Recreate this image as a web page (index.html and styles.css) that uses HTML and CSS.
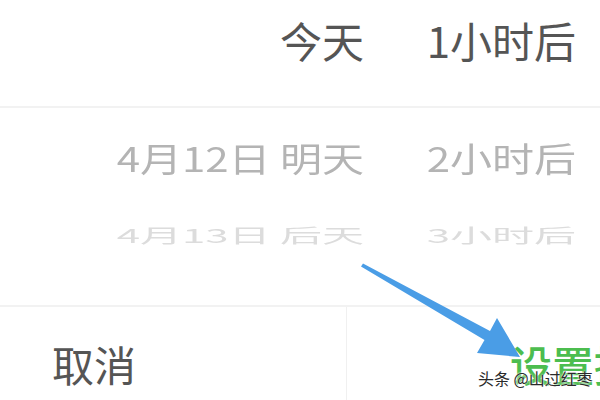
FILE: index.html
```html
<!DOCTYPE html>
<html lang="zh-CN">
<head>
  <meta charset="UTF-8">
  <meta name="viewport" content="width=device-width, initial-scale=1.0">
  <title>设置提醒时间</title>
  <link rel="stylesheet" href="styles.css">
</head>
<body>
  <div class="sheet">
    <!-- Time wheel -->
    <div class="wheel">
      <div class="wheel-row current">
        <span class="day">今天</span>
        <span class="hour">1小时后</span>
      </div>
      <div class="wheel-row next">
        <span class="day">4月12日 明天</span>
        <span class="hour">2小时后</span>
      </div>
      <div class="wheel-row far">
        <span class="day">4月13日 后天</span>
        <span class="hour">3小时后</span>
      </div>
    </div>

    <!-- Actions -->
    <div class="actions">
      <div class="action cancel">取消</div>
      <div class="action confirm">设置提醒</div>
    </div>

    <!-- Annotation arrow -->
    <svg class="arrow" width="600" height="400" viewBox="0 0 600 400">
      <polygon points="361,266.5 363,263.5 490,331 497,318 520,357 477,353 484.5,340" fill="#4a9de6"/>
    </svg>

    <div class="watermark">头条 @山过红枣</div>
  </div>
</body>
</html>
```

FILE: styles.css
```css
body {
  margin: 0;
  background: #fff;
  font-family: "Noto Sans CJK SC", "Noto Sans", sans-serif;
}

.sheet {
  position: relative;
  width: 600px;
  height: 400px;
  overflow: hidden;
}

/* Wheel picker */
.wheel {
  height: 305px;
}

.wheel-row {
  display: grid;
  grid-template-columns: 364px 212px;
  align-items: center;
  font-size: 42px;
  white-space: nowrap;
}

.wheel-row span {
  text-align: right;
}

.current {
  height: 78px;
  padding-bottom: 28px;
  color: #555;
  border-bottom: 2px solid #f2f2f2;
}

.next {
  height: 96px;
  color: #b4b4b4;
}

.next span {
  transform: scaleY(0.82);
  filter: blur(0.4px);
}

.far {
  height: 60px;
  color: #dcdcdc;
}

.far span {
  transform: scaleY(0.46);
  filter: blur(0.7px);
}

/* Bottom buttons */
.actions {
  display: flex;
  height: 93px;
  border-top: 2px solid #f2f2f2;
}

.action {
  display: flex;
  align-items: center;
  flex-shrink: 0;
  padding-top: 20px;
  font-size: 42px;
  white-space: nowrap;
}

.cancel {
  width: 294px;
  padding-left: 52px;
  color: #555;
  border-right: 1px solid #f0f0f0;
}

.confirm {
  padding-left: 163px;
  color: #4cbd4f;
  font-weight: 500;
}

.arrow {
  position: absolute;
  left: 0;
  top: 0;
}

.watermark {
  position: absolute;
  left: 478px;
  top: 366px;
  font-size: 16px;
  color: #2a2a2a;
  text-shadow: 0 0 2px #fff, 0 0 2px #fff;
}
```
